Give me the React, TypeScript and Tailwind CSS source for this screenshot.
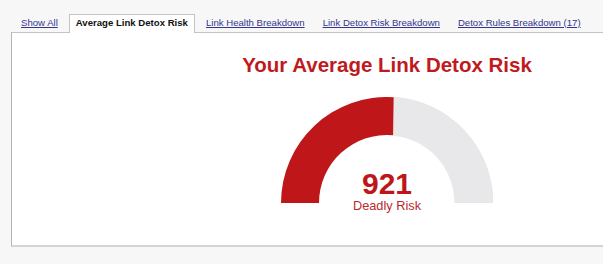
import React from 'react'

const tabs = [
  { label: 'Show All' },
  { label: 'Average Link Detox Risk', active: true },
  { label: 'Link Health Breakdown' },
  { label: 'Link Detox Risk Breakdown' },
  { label: 'Detox Rules Breakdown (17)' },
]

function Gauge({ value, fraction }: { value: number; fraction: number }) {
  const R = 106
  const r = 68
  const cx = 106
  const cy = 106
  const a = Math.PI * fraction
  const ox = cx - R * Math.cos(a)
  const oy = cy - R * Math.sin(a)
  // split edge is drawn almost vertical in the reference
  const ix = ox - 0.6
  const iy = cy - Math.sqrt(r * r - (ix - cx) * (ix - cx))
  const red = `M0,${cy} A${R},${R} 0 0 1 ${ox},${oy} L${ix},${iy} A${r},${r} 0 0 0 ${cx - r},${cy} Z`
  const gray = `M${ox},${oy} A${R},${R} 0 0 1 ${cx + R},${cy} L${cx + r},${cy} A${r},${r} 0 0 0 ${ix},${iy} Z`
  return (
    <div className="relative h-[106px] w-[212px]">
      <svg width="212" height="106" viewBox="0 0 212 106" className="block">
        <path d={gray} fill="#e8e8ea" stroke="#e0e0e2" strokeWidth="0.6" />
        <path d={red} fill="#bf1619" />
      </svg>
      <div className="absolute left-0 right-0 top-[72px] flex flex-col items-center text-[#bf1619]">
        <div className="text-[30px] font-bold leading-[30px]">{value}</div>
        <div className="text-[12.75px] leading-[13px] text-[#b82a2d]">Deadly Risk</div>
      </div>
    </div>
  )
}

export default function App() {
  return (
    <div
      className="h-[264px] w-[603px] overflow-hidden bg-[#f7f7f7]"
      style={{ fontFamily: '"Liberation Sans", Arial, sans-serif' }}
    >
      <ul className="flex h-[32px] items-end gap-[4px] pl-[14px]">
        {tabs.map((t) =>
          t.active ? (
            <li
              key={t.label}
              className="relative -mb-px flex h-[19px] items-center border border-b-0 border-[#c4c4c4] bg-white px-[6px] pb-[1px] text-[9.6px] font-bold text-[#111]"
            >
              {t.label}
            </li>
          ) : (
            <li
              key={t.label}
              className="flex h-[18px] items-center px-[7px] text-[9.6px] text-[#35358f] underline"
            >
              {t.label}
            </li>
          ),
        )}
      </ul>
      <div className="ml-[11px] h-[215px] w-[751px] border-b-2 border-l border-t border-b-[#d4d4d4] border-l-[#b4b4b4] border-t-[#c4c4c4] bg-white">
        <div className="flex flex-col items-center pt-[20px]">
          <h1 className="text-[20.5px] font-bold leading-[24px] text-[#bf1a1e]">
            Your Average Link Detox Risk
          </h1>
          <div className="mt-[20px]">
            <Gauge value={921} fraction={0.52} />
          </div>
        </div>
      </div>
    </div>
  )
}
